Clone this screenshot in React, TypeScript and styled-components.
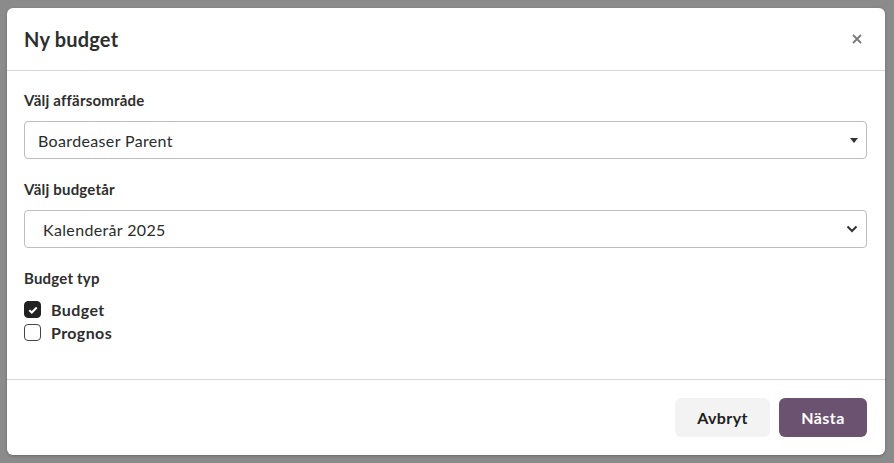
import styled, { createGlobalStyle } from 'styled-components';

const Global = createGlobalStyle`
  html, body {
    margin: 0;
    padding: 0;
    height: 100%;
  }
  body {
    font-family: Lato, "Open Sans", sans-serif;
    color: #2b2b2b;
  }
  #root {
    height: 100%;
  }
`;

const Backdrop = styled.div`
  height: 463px;
  box-sizing: border-box;
  padding: 8px 9px 8px 7px;
  background: #8b8b8b;
  display: flex;
`;

const Modal = styled.div`
  flex: 1;
  background: #fff;
  border-radius: 6px;
  display: flex;
  flex-direction: column;
  box-shadow: 0 1px 3px rgba(0, 0, 0, 0.25);
`;

const Header = styled.div`
  height: 62px;
  display: flex;
  align-items: center;
  justify-content: space-between;
  padding: 0 22px 0 17px;
  border-bottom: 1px solid #d6d6d6;
`;

const Title = styled.h2`
  margin: 0;
  font-size: 20px;
  font-weight: 700;
  letter-spacing: 0.2px;
  color: #2e2e2e;
`;

const Close = styled.button`
  border: 0;
  background: none;
  padding: 0;
  width: 12px;
  height: 12px;
  display: flex;
  cursor: pointer;
`;

const Body = styled.div`
  flex: 1;
  padding: 19px 18px 0 17px;
  border-bottom: 1px solid #d6d6d6;
`;

const Group = styled.div`
  margin-bottom: 20px;
`;

const Label = styled.div`
  font-size: 15px;
  font-weight: 700;
  line-height: 20px;
  letter-spacing: 0.2px;
  margin-bottom: 11px;
  color: #2e2e2e;
`;

const Select = styled.div<{ $pad: number }>`
  height: 38px;
  box-sizing: border-box;
  border: 1px solid #bdbdbd;
  border-radius: 4px;
  display: flex;
  align-items: center;
  justify-content: space-between;
  padding: 0 8px 0 ${(p) => p.$pad}px;
  font-size: 16px;
  letter-spacing: 0.35px;
  color: #2b2b2b;
`;

const CheckList = styled.div`
  display: flex;
  flex-direction: column;
  gap: 6px;
  margin-top: 13px;
`;

const CheckRow = styled.label`
  display: flex;
  align-items: center;
  gap: 10px;
  font-size: 16px;
  font-weight: 700;
  letter-spacing: 0.4px;
  line-height: 17px;
  color: #2e2e2e;
`;

const Box = styled.span<{ $on?: boolean }>`
  width: 17px;
  height: 17px;
  box-sizing: border-box;
  border-radius: 4px;
  border: 1.5px solid ${(p) => (p.$on ? '#222' : '#444')};
  background: ${(p) => (p.$on ? '#222' : '#fff')};
  display: flex;
  align-items: center;
  justify-content: center;
`;

const Footer = styled.div`
  height: 74px;
  display: flex;
  align-items: center;
  justify-content: flex-end;
  gap: 9px;
  padding: 0 18px 1px;
`;

const Button = styled.button<{ $primary?: boolean }>`
  height: 39px;
  width: ${(p) => (p.$primary ? 88 : 95)}px;
  border: 0;
  border-radius: 6px;
  padding: 0;
  font-family: Lato, sans-serif;
  font-size: 16px;
  font-weight: 700;
  letter-spacing: 0.4px;
  background: ${(p) => (p.$primary ? '#6b5270' : '#f3f3f3')};
  color: ${(p) => (p.$primary ? '#fff' : '#1f1f1f')};
  cursor: pointer;
`;

export default function App() {
  return (
    <>
      <Global />
      <Backdrop>
        <Modal>
          <Header>
            <Title>Ny budget</Title>
            <Close aria-label="Stäng">
              <svg width="12" height="12" viewBox="0 0 12 12">
                <path d="M2 2L10 10M10 2L2 10" stroke="#7a7a7a" strokeWidth="1.8" />
              </svg>
            </Close>
          </Header>
          <Body>
            <Group>
              <Label>Välj affärsområde</Label>
              <Select $pad={13}>
                <span>Boardeaser Parent</span>
                <svg width="8" height="5" viewBox="0 0 8 5">
                  <path d="M0 0H8L4 5Z" fill="#333" />
                </svg>
              </Select>
            </Group>
            <Group>
              <Label>Välj budgetår</Label>
              <Select $pad={18}>
                <span>Kalenderår 2025</span>
                <svg width="12" height="8" viewBox="0 0 12 8">
                  <path d="M1.5 1.5L6 6L10.5 1.5" fill="none" stroke="#333" strokeWidth="2" />
                </svg>
              </Select>
            </Group>
            <Label>Budget typ</Label>
            <CheckList>
              <CheckRow>
                <Box $on>
                  <svg width="10" height="8" viewBox="0 0 10 8">
                    <path d="M1.3 4.2L3.8 6.5L8.7 1.5" fill="none" stroke="#fff" strokeWidth="2" />
                  </svg>
                </Box>
                Budget
              </CheckRow>
              <CheckRow>
                <Box />
                Prognos
              </CheckRow>
            </CheckList>
          </Body>
          <Footer>
            <Button>Avbryt</Button>
            <Button $primary>Nästa</Button>
          </Footer>
        </Modal>
      </Backdrop>
    </>
  );
}
